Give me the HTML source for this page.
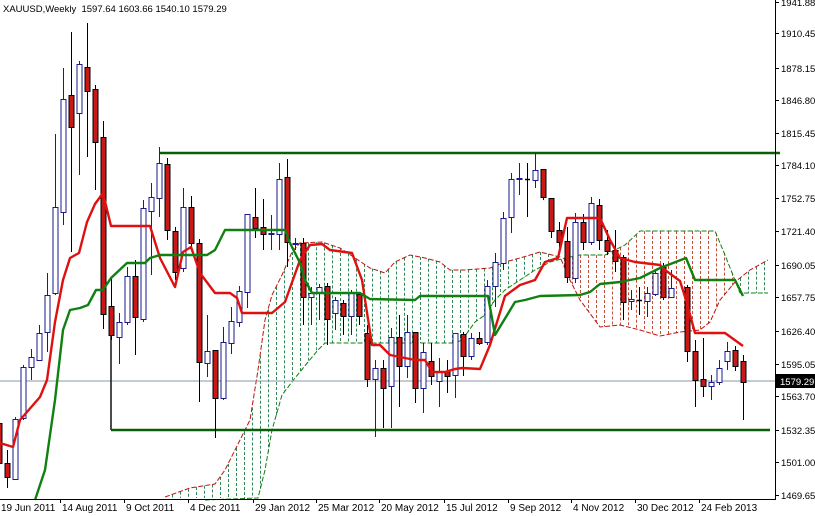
<!DOCTYPE html>
<html><head><meta charset="utf-8"><style>
html,body{margin:0;padding:0;background:#fff;width:815px;height:516px;overflow:hidden}
svg{display:block;font-family:"Liberation Sans",Arial,sans-serif}
</style></head><body>
<svg id="s" width="815" height="516" viewBox="0 0 815 516" xmlns="http://www.w3.org/2000/svg">
<rect width="815" height="516" fill="#fff"/>
<g id="cloud"></g>
<line x1="0" y1="381" x2="775" y2="381" stroke="#8a9aa6" stroke-width="1"/>
<polyline fill="none" stroke="#111" stroke-width="1.5" points="111,333 111,430"/>
<line x1="111" y1="430" x2="770" y2="430" stroke="#0a5e0a" stroke-width="2.5"/>
<line x1="160" y1="153" x2="780" y2="153" stroke="#0a5e0a" stroke-width="2.5"/>
<g id="candles"></g>
<polyline fill="none" stroke="#e01010" stroke-width="2.4" stroke-linejoin="round" points="0,443 13,447 20,420 40,397 47,380 55,322 63,280 70,258 79,253 87,222 95,204 103,193 111,226 150,226 160,258 175,287 183,252 191,247 200,273 215,293 230,293 237,298 242,313 272,313 285,302 300,260 310,245 322,244 330,250 352,253 362,280 372,345 380,345 390,355 415,360 425,360 432,372 445,372 455,369 462,368 480,369 490,345 505,296 520,285 535,280 545,262 558,258 567,218 600,218 610,240 620,258 635,262 660,265 665,270 680,281 686,300 695,333 725,333 743,346"/>
<polyline fill="none" stroke="#108010" stroke-width="2.4" stroke-linejoin="round" points="35,500 45,470 55,400 63,330 70,310 80,308 88,305 96,290 103,290 111,278 127,263 145,263 150,258 160,255 207,255 215,250 225,230 285,230 290,243 300,263 305,280 312,293 360,293 370,299 415,300 420,296 488,296 495,335 515,302 525,300 540,296 580,295 590,292 600,284 620,282 640,278 660,268 686,258 695,280 735,280 743,296"/>
<line x1="775.5" y1="0" x2="775.5" y2="499" stroke="#000" stroke-width="1"/>
<line x1="0" y1="499.5" x2="776" y2="499.5" stroke="#000" stroke-width="1"/>
<g id="yax" font-size="9.5" fill="#000"></g>
<rect x="776" y="374" width="39" height="14" fill="#000"/>
<text x="780" y="385" font-size="9.5" fill="#fff">1579.29</text>
<g id="xax" font-size="10" fill="#000"></g>
<text x="3" y="12" font-size="9.5" fill="#000" xml:space="preserve">XAUUSD,Weekly  1597.64 1603.66 1540.10 1579.29</text>
</svg>
<script>
(function(){
var NS="http://www.w3.org/2000/svg";
function el(p,t,a,txt){var e=document.createElementNS(NS,t);for(var k in a)e.setAttribute(k,a[k]);if(txt!==undefined)e.textContent=txt;p.appendChild(e);return e;}
var D="r,-1,423,463,410,470;r,7,463,477,450,488;b,15,419,479,417,480;b,23,367,418,365,420;b,31,357,367,349,380;b,39,333,360,325,360;b,47,295,332,273,352;b,55,207,293,134,295;b,63,99,212,68,225;r,71,95,127,32,252;b,79,64,113,61,175;r,87,67,91,23,157;r,95,89,142,85,190;r,103,137,314,121,329;r,111,306,335,278,340;b,119,322,337,313,364;b,127,276,322,267,325;r,135,276,317,260,355;b,143,208,319,200,322;b,151,197,211,183,275;b,159,163,198,147,217;r,167,164,230,158,240;r,175,231,272,227,280;b,183,207,268,188,272;r,191,207,243,196,250;r,199,243,362,239,402;b,207,351,363,315,377;r,215,350,398,350,438;b,223,342,398,327,400;b,231,321,343,307,354;b,239,291,322,286,327;b,247,214,292,214,308;r,255,217,228,188,238;r,263,227,234,199,250;b,271,233,234,215,250;b,279,179,234,163,250;r,287,177,242,159,267;b,295,243,244,238,250;r,303,243,297,238,325;b,311,293,297,287,325;b,319,287,293,284,320;r,327,286,319,283,345;b,335,300,313,297,330;r,343,303,316,300,335;b,351,293,316,290,335;r,359,294,316,292,325;r,367,333,379,325,387;b,375,368,379,360,437;r,383,368,388,360,428;b,391,337,386,328,428;r,399,337,366,315,407;b,407,332,366,315,378;r,415,332,388,332,403;b,423,352,388,343,413;r,431,361,376,343,385;b,439,372,381,358,407;r,447,371,376,360,393;b,455,333,375,333,398;r,463,334,356,332,376;b,471,338,356,333,360;r,479,338,343,332,345;b,487,286,342,280,345;b,495,262,286,253,307;b,503,218,263,212,270;b,511,179,217,173,233;b,519,178,179,163,195;k,527,179,179,163,217;b,535,170,180,153,188;r,543,169,197,169,200;r,551,198,231,198,238;r,559,230,242,222,248;r,567,241,277,227,283;b,575,222,278,213,283;r,583,222,242,214,250;b,591,203,242,197,245;r,599,205,240,199,250;r,607,240,251,230,255;r,615,250,261,230,272;r,623,257,302,255,320;b,631,299,301,290,310;k,639,300,300,287,315;b,647,293,301,287,317;b,655,273,294,270,296;r,663,267,297,263,300;b,671,288,297,270,298;r,687,287,351,285,362;r,695,351,380,340,407;r,703,379,386,338,397;b,711,382,386,375,400;b,719,368,382,360,385;b,727,351,361,342,370;r,735,350,366,346,371;r,743,361,382,355,420";
var cg=document.getElementById("candles");
D.split(";").forEach(function(s){var a=s.split(","),c=a[0],x=+a[1],t=+a[2],b=+a[3],h=+a[4],l=+a[5];
 var sc=c=="b"?"#1a1a8c":"#000";
 el(cg,"line",{x1:x+.5,y1:h,x2:x+.5,y2:l,stroke:sc,"stroke-width":1});
 if(c=="k"){el(cg,"line",{x1:x-2,y1:t+.5,x2:x+3,y2:t+.5,stroke:"#000","stroke-width":1.5});return;}
 var hh=Math.max(b-t,1);
 el(cg,"rect",{x:x-2,y:t+.5,width:5,height:hh,fill:c=="r"?"#c81818":"#fff",stroke:sc,"stroke-width":1});
});
function interp(P,x){if(x<=P[0][0])return P[0][1];for(var i=1;i<P.length;i++){if(x<=P[i][0]){var a=P[i-1],b=P[i];return a[1]+(b[1]-a[1])*(x-a[0])/(b[0]-a[0]);}}return P[P.length-1][1];}
var SA=[[165,497],[190,488],[215,484],[225,470],[240,440],[250,420],[258,370],[265,320],[272,295],[282,275],[292,252],[300,243],[322,242],[340,248],[355,258],[370,268],[385,273],[395,262],[410,255],[425,258],[440,262],[450,270],[465,270],[490,268],[505,262],[520,258],[540,252],[560,257],[570,280],[580,300],[600,327],[620,325],[640,330],[660,336],[680,332],[700,330],[710,322],[720,300],[735,282],[750,270],[768,260]];
var SB=[[205,500],[258,498],[265,470],[272,430],[282,395],[295,378],[308,362],[318,350],[325,343],[455,343],[462,340],[475,322],[485,315],[495,300],[505,290],[520,280],[535,270],[550,262],[565,258],[580,255],[605,255],[625,245],[640,231],[715,231],[725,255],[740,293],[768,293]];
var cl=document.getElementById("cloud");
for(var x=172;x<=768;x+=8){var ya=interp(SA,x),yb=interp(SB,x);var y1=Math.min(ya,yb),y2=Math.min(Math.max(ya,yb),498);
 if(y2-y1<2)continue;
 el(cl,"line",{x1:x+.5,y1:y1,x2:x+.5,y2:y2,stroke:ya<yb?"#2e8b57":"#c0503a","stroke-width":1,"stroke-dasharray":"3,2"});}
function pts(P){return P.map(function(p){return p[0]+","+p[1]}).join(" ");}
el(cl,"polyline",{points:pts(SA),fill:"none",stroke:"#c01010","stroke-width":1,"stroke-dasharray":"5,2"});
el(cl,"polyline",{points:pts(SB),fill:"none",stroke:"#108010","stroke-width":1,"stroke-dasharray":"5,2"});
var Y=[["1941.88",2],["1910.45",33],["1878.15",68],["1846.80",100],["1815.45",133],["1784.10",165],["1752.75",198],["1721.40",231],["1690.05",265],["1657.75",297],["1626.40",331],["1595.05",364],["1563.70",396],["1532.35",430],["1501.00",462],["1469.65",495]];
var yg=document.getElementById("yax");
Y.forEach(function(v){el(yg,"line",{x1:775,y1:v[1]+.5,x2:779,y2:v[1]+.5,stroke:"#000"});el(yg,"text",{x:781,y:v[1]+4},v[0]);});
var X=[["19 Jun 2011",1],["14 Aug 2011",62],["9 Oct 2011",126],["4 Dec 2011",190],["29 Jan 2012",255],["25 Mar 2012",318],["20 May 2012",381],["15 Jul 2012",446],["9 Sep 2012",510],["4 Nov 2012",573],["30 Dec 2012",637],["24 Feb 2013",701]];
var xg=document.getElementById("xax");
X.forEach(function(v){el(xg,"line",{x1:v[1]-2+.5,y1:499,x2:v[1]-2+.5,y2:503,stroke:"#000"});el(xg,"text",{x:v[1],y:511},v[0]);});
})();
</script>
</body></html>
